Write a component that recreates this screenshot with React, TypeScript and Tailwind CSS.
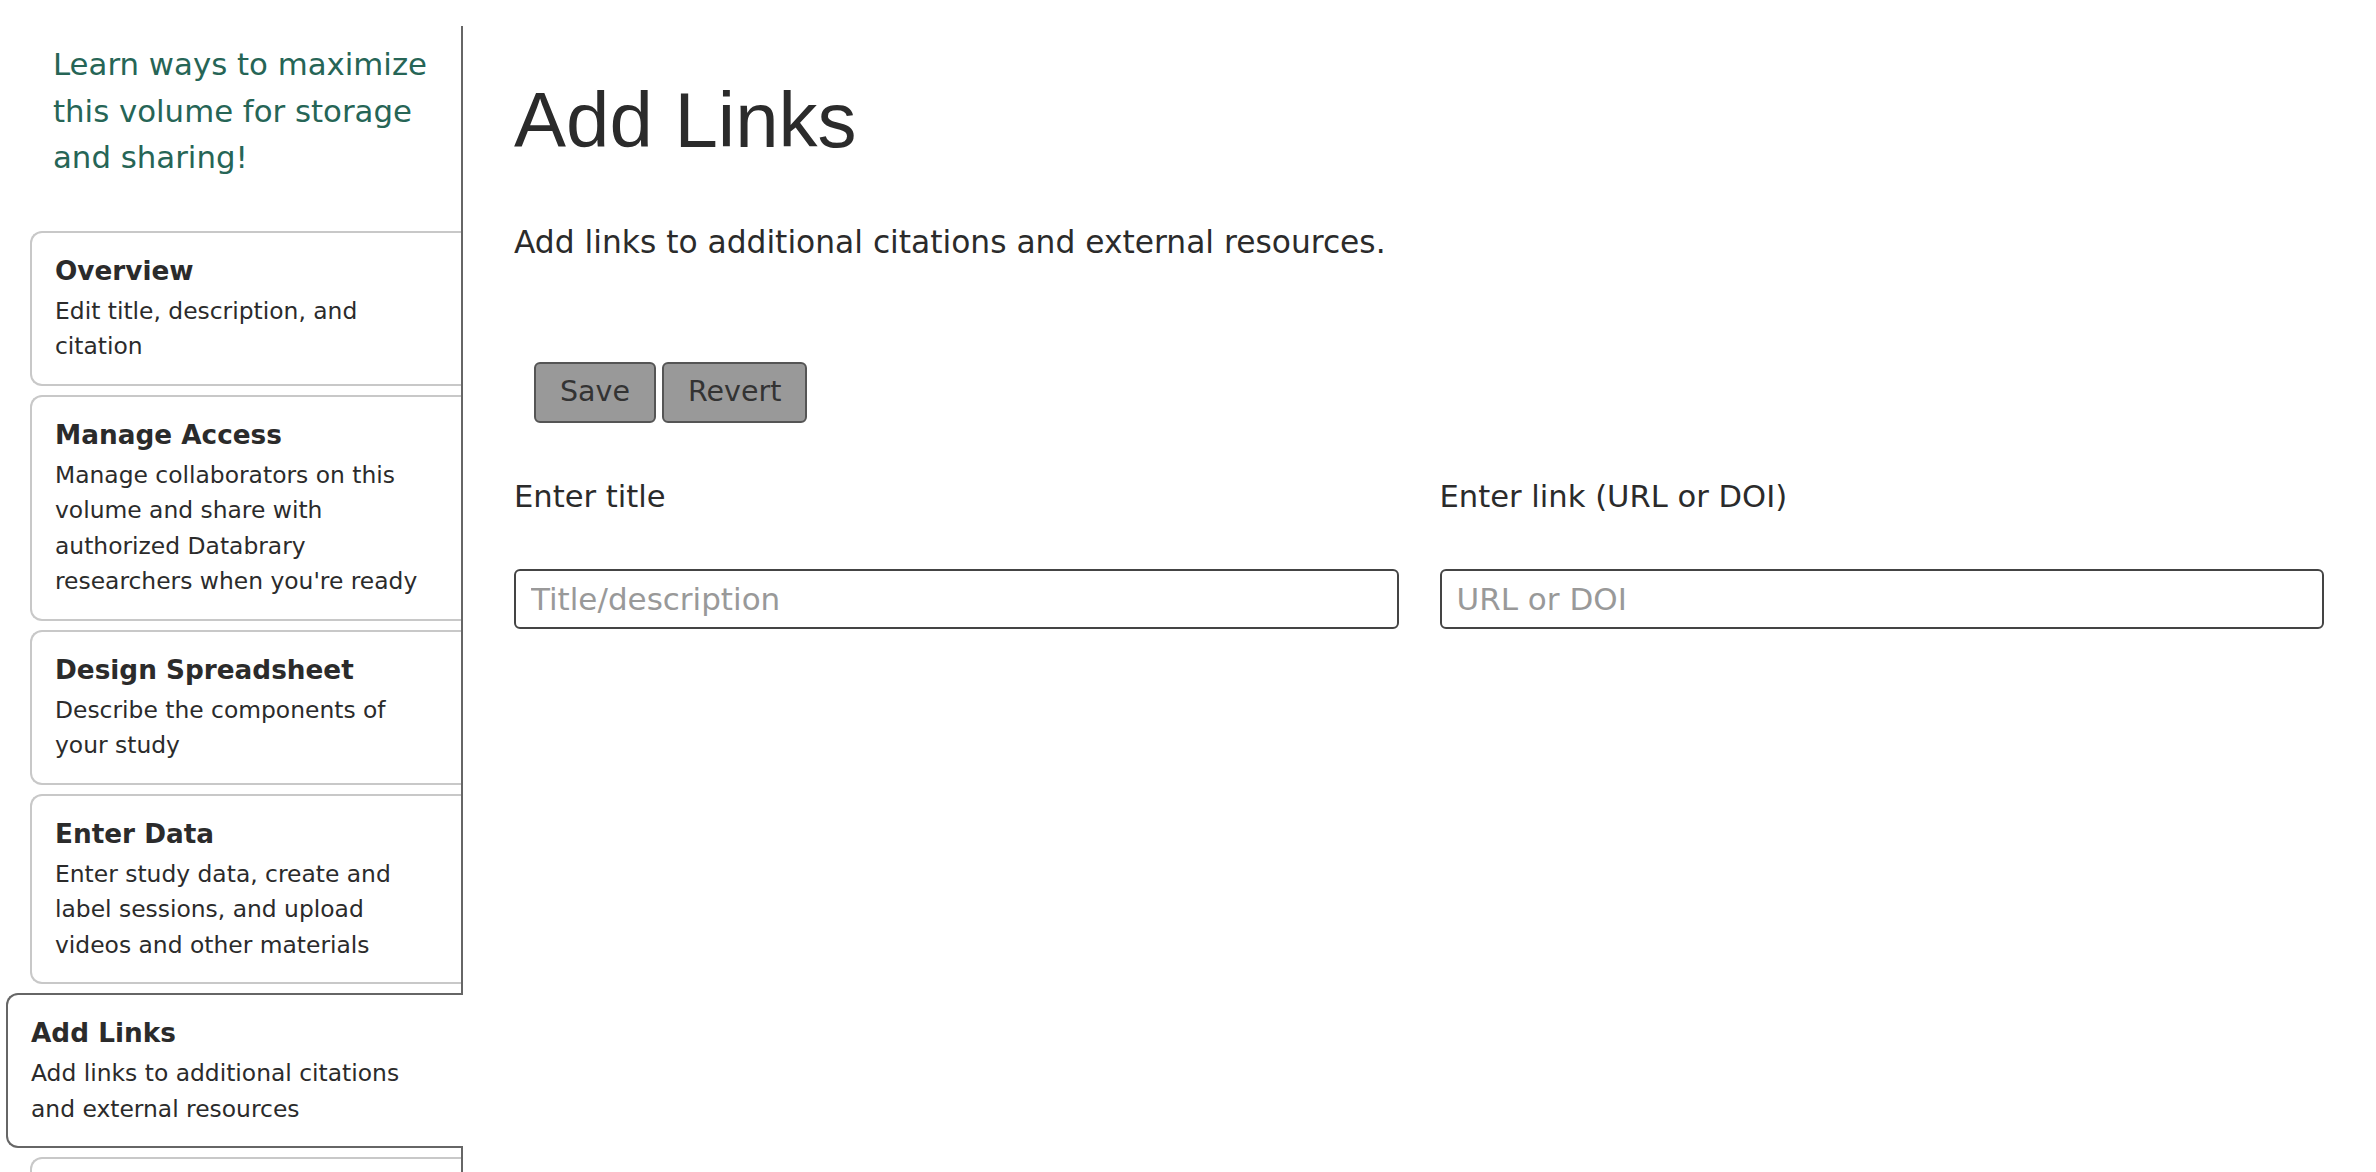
import { useState } from "react"

interface Step {
  title: string
  description: string
}

const steps: Step[] = [
  { title: "Overview", description: "Edit title, description, and citation" },
  {
    title: "Manage Access",
    description:
      "Manage collaborators on this volume and share with authorized Databrary researchers when you're ready",
  },
  { title: "Design Spreadsheet", description: "Describe the components of your study" },
  {
    title: "Enter Data",
    description: "Enter study data, create and label sessions, and upload videos and other materials",
  },
  { title: "Add Links", description: "Add links to additional citations and external resources" },
  { title: "Share Volume", description: "Share this volume with the public" },
]

function StepCard({ step, active }: { step: Step; active: boolean }) {
  return (
    <div
      className={
        active
          ? "relative ml-[6px] -mr-[2px] mb-[9px] rounded-l-[12px] border-2 border-r-0 border-[#666] bg-white pt-[20px] pb-[19px] pl-[23px] pr-[31px]"
          : "ml-[30px] mb-[9px] rounded-l-[12px] border-2 border-r-0 border-[#c8c8c8] bg-white pt-[20px] pb-[19px] pl-[23px] pr-[29px]"
      }
    >
      <div className="mb-[5px] text-[26.3px] font-bold leading-[36px] text-[#2b2b2b]">{step.title}</div>
      <div className="text-[23.4px] leading-[35.5px] text-[#2b2b2b]">{step.description}</div>
    </div>
  )
}

export default function App() {
  const [title, setTitle] = useState("")
  const [link, setLink] = useState("")

  return (
    <div className="flex min-h-screen bg-white font-['DejaVu_Sans',Verdana,sans-serif] text-[#333]">
      <aside className="mt-[26px] w-[463px] shrink-0 border-r-2 border-[#666]">
        <p className="mb-[50px] pt-[15px] pl-[53px] w-[453px] text-[30.8px] leading-[46.5px] text-[#266556]">
          Learn ways to maximize this volume for storage and sharing!
        </p>
        {steps.map((step) => (
          <StepCard key={step.title} step={step} active={step.title === "Add Links"} />
        ))}
      </aside>

      <main className="flex-1 pl-[51px] pr-[52px] pt-[73px]">
        <h1 className="font-['Liberation_Sans',Arial,sans-serif] text-[78px] leading-[94px] text-[#2b2b2b]">
          Add Links
        </h1>
        <p className="mt-[52px] text-[31.3px] leading-[46px] text-[#2b2b2b]">
          Add links to additional citations and external resources.
        </p>

        <div className="mt-[97px] ml-[20px] flex gap-[6px]">
          <button className="h-[61px] rounded-[6px] border-2 border-[#555] bg-[#999] px-[24px] text-[28.5px] text-[#333]">
            Save
          </button>
          <button className="h-[61px] rounded-[6px] border-2 border-[#555] bg-[#999] px-[24px] text-[28.5px] text-[#333]">
            Revert
          </button>
        </div>

        <div className="mt-[51px] grid grid-cols-2 gap-x-[41px]">
          <div>
            <label htmlFor="link-title" className="block text-[30.6px] leading-[45px] text-[#2b2b2b]">
              Enter title
            </label>
            <input
              id="link-title"
              value={title}
              onChange={(e) => setTitle(e.target.value)}
              placeholder="Title/description"
              className="mt-[50px] h-[60px] w-full rounded-[6px] border-2 border-[#444] px-[15px] text-[31px] text-[#333] outline-none placeholder:text-[#999]"
            />
          </div>
          <div>
            <label htmlFor="link-url" className="block text-[30.6px] leading-[45px] text-[#2b2b2b]">
              Enter link (URL or DOI)
            </label>
            <input
              id="link-url"
              value={link}
              onChange={(e) => setLink(e.target.value)}
              placeholder="URL or DOI"
              className="mt-[50px] h-[60px] w-full rounded-[6px] border-2 border-[#444] px-[15px] text-[31px] text-[#333] outline-none placeholder:text-[#999]"
            />
          </div>
        </div>
      </main>
    </div>
  )
}
